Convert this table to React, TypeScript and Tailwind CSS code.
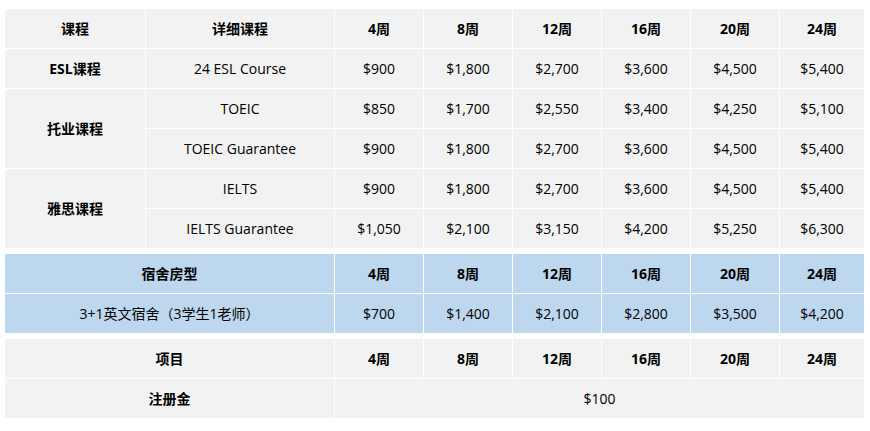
const weeks = ["4周", "8周", "12周", "16周", "20周", "24周"];

const courses = [
  { group: "ESL课程", rows: [{ name: "24 ESL Course", prices: ["$900", "$1,800", "$2,700", "$3,600", "$4,500", "$5,400"] }] },
  {
    group: "托业课程",
    rows: [
      { name: "TOEIC", prices: ["$850", "$1,700", "$2,550", "$3,400", "$4,250", "$5,100"] },
      { name: "TOEIC Guarantee", prices: ["$900", "$1,800", "$2,700", "$3,600", "$4,500", "$5,400"] },
    ],
  },
  {
    group: "雅思课程",
    rows: [
      { name: "IELTS", prices: ["$900", "$1,800", "$2,700", "$3,600", "$4,500", "$5,400"] },
      { name: "IELTS Guarantee", prices: ["$1,050", "$2,100", "$3,150", "$4,200", "$5,250", "$6,300"] },
    ],
  },
];

const dorm = ["$700", "$1,400", "$2,100", "$2,800", "$3,500", "$4,200"];

const gridCols = "grid grid-cols-[140px_188px_88px_88px_88px_88px_88px_84px] auto-rows-[39px] gap-px";

function Cell({ children, bold, className = "" }: { children: React.ReactNode; bold?: boolean; className?: string }) {
  return (
    <div className={`flex items-center justify-center text-[14px] text-black ${bold ? "font-bold" : ""} ${className}`}>
      {children}
    </div>
  );
}

export default function App() {
  return (
    <div
      className="w-[870px] h-[431px] bg-white pt-[9px] pl-[5px] flex flex-col gap-[6px]"
      style={{ fontFamily: '"Open Sans", "Noto Sans CJK SC", sans-serif' }}
    >
      {/* course prices */}
      <div className={gridCols}>
        <Cell bold className="bg-[#f2f2f2]">课程</Cell>
        <Cell bold className="bg-[#f2f2f2]">详细课程</Cell>
        {weeks.map(w => (
          <Cell key={w} bold className="bg-[#f2f2f2]">{w}</Cell>
        ))}
        {courses.map(c =>
          c.rows.map((r, i) => (
            <>
              {i === 0 && (
                <Cell
                  bold
                  className={`bg-[#f2f2f2] ${c.rows.length === 2 ? "row-span-2" : ""}`}
                >
                  {c.group}
                </Cell>
              )}
              <Cell className="bg-[#f2f2f2]">{r.name}</Cell>
              {r.prices.map((p, j) => (
                <Cell key={j} className="bg-[#f2f2f2]">{p}</Cell>
              ))}
            </>
          ))
        )}
      </div>

      {/* dorm */}
      <div className={gridCols}>
        <Cell bold className="col-span-2 bg-[#bdd7ee]">宿舍房型</Cell>
        {weeks.map(w => (
          <Cell key={w} bold className="bg-[#bdd7ee]">{w}</Cell>
        ))}
        <Cell className="col-span-2 bg-[#bdd7ee]">3+1英文宿舍（3学生1老师）</Cell>
        {dorm.map((p, j) => (
          <Cell key={j} className="bg-[#bdd7ee]">{p}</Cell>
        ))}
      </div>

      {/* fees */}
      <div className={gridCols}>
        <Cell bold className="col-span-2 bg-[#f2f2f2]">项目</Cell>
        {weeks.map(w => (
          <Cell key={w} bold className="bg-[#f2f2f2]">{w}</Cell>
        ))}
        <Cell bold className="col-span-2 bg-[#f2f2f2]">注册金</Cell>
        <Cell className="col-span-6 bg-[#f2f2f2]">$100</Cell>
      </div>
    </div>
  );
}
